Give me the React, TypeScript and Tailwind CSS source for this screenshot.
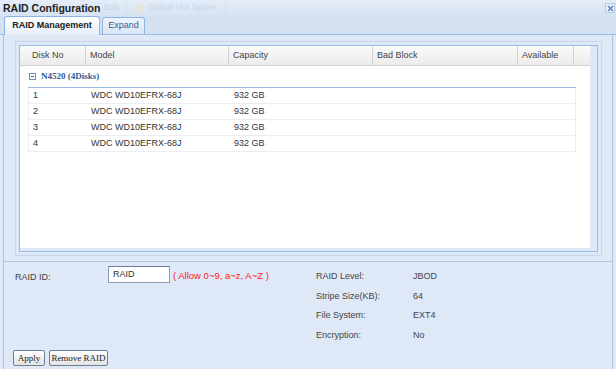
import React from 'react';

const disks = [
  { no: '1', model: 'WDC WD10EFRX-68J', capacity: '932 GB' },
  { no: '2', model: 'WDC WD10EFRX-68J', capacity: '932 GB' },
  { no: '3', model: 'WDC WD10EFRX-68J', capacity: '932 GB' },
  { no: '4', model: 'WDC WD10EFRX-68J', capacity: '932 GB' },
];

const info = [
  { label: 'RAID Level:', value: 'JBOD' },
  { label: 'Stripe Size(KB):', value: '64' },
  { label: 'File System:', value: 'EXT4' },
  { label: 'Encryption:', value: 'No' },
];

const sans = { fontFamily: '"Liberation Sans", Arial, sans-serif' };
const serif = { fontFamily: '"Liberation Serif", "Times New Roman", serif' };

export default function App() {
  return (
    <div
      className="w-[616px] h-[369px] bg-[#dfe8f6] flex flex-col overflow-hidden text-[9px] text-[#333]"
      style={sans}
    >
      {/* Title + faded toolbar */}
      <div className="h-[16px] flex items-center bg-gradient-to-b from-[#e4edf8] to-[#d6e3f3] relative">
        <span className="pl-[3px] text-[10.5px] leading-none font-bold text-[#222]">RAID Configuration</span>
        <div className="flex items-center ml-[3px] text-[#c9d6e8] text-[9px]">
          <span>Edit</span>
          <span className="w-[1px] h-[12px] bg-[#d3deec] mx-[7px]" />
          <span className="w-[10px] h-[10px] rounded-full bg-[#e3e6dc] mr-[3px]" />
          <span>Global Hot Spare</span>
          <span className="w-[1px] h-[12px] bg-[#d3deec] ml-[9px]" />
        </div>
        <div className="absolute right-[1px] top-[3px] w-[10px] h-[10px] border border-[#b6c9e3] bg-[#e8f0fa] flex items-center justify-center">
          <svg width="7" height="7" viewBox="0 0 7 7">
            <path d="M1 1 L6 6 M6 1 L1 6" stroke="#5b7eb3" strokeWidth="1.3" />
          </svg>
        </div>
      </div>

      {/* Tabs */}
      <div className="h-[19px] flex items-end pl-[4px] gap-[2px] border-b border-[#99bbe8] bg-[#d3e1f1]">
        <div className="h-[19px] w-[96px] flex items-center justify-center border border-b-0 border-[#8db2e3] rounded-t-[3px] bg-gradient-to-b from-white to-[#e6eefa] font-bold text-[#222] mb-[-1px]">
          RAID Management
        </div>
        <div className="h-[17px] w-[43px] flex items-center justify-center border border-b-0 border-[#8db2e3] rounded-t-[3px] bg-gradient-to-b from-[#eef4fc] to-[#d9e6f6] text-[#3b5e8e]">
          Expand
        </div>
      </div>

      {/* Body */}
      <div className="flex-1 flex flex-col border-l border-r border-[#b0c4de] ml-[3px] mr-[3px]">
        <div className="h-[226px] pt-[6px] pl-[11px] pr-[10px]">
          <div className="h-[215px] border border-[#c6d6ec] p-[3px]">
            <div className="h-full border border-[#99bbe8] bg-[#dfe8f6] flex pb-[3px]">
              <div className="w-[570px] h-full bg-white flex flex-col">
                {/* Header */}
                <div className="h-[20px] flex bg-gradient-to-b from-[#fbfbfb] to-[#ebebeb] border-b border-[#d0d0d0] text-[#444]">
                  <div className="w-[66px] pl-[12px] flex items-center border-r border-[#d0d0d0]">Disk No</div>
                  <div className="w-[143px] pl-[4px] flex items-center border-r border-[#d0d0d0]">Model</div>
                  <div className="w-[144px] pl-[4px] flex items-center border-r border-[#d0d0d0]">Capacity</div>
                  <div className="w-[145px] pl-[4px] flex items-center border-r border-[#d0d0d0]">Bad Block</div>
                  <div className="w-[56px] pl-[4px] flex items-center border-r border-[#d0d0d0]">Available</div>
                </div>
                {/* Group */}
                <div className="ml-[8px] mr-[14px] h-[22px] flex items-center border-b border-[#99bbe8]">
                  <div className="w-[7px] h-[7px] ml-[1px] border border-[#6f8db8] flex items-center justify-center">
                    <div className="w-[3px] h-[1px] bg-[#3c5f92]" />
                  </div>
                  <span className="ml-[5px] font-bold text-[#2f5a96]" style={serif}>
                    N4520 (4Disks)
                  </span>
                </div>
                {disks.map((d) => (
                  <div key={d.no} className="ml-[8px] mr-[14px] h-[16px] flex items-center border border-t-0 border-[#ededed] text-[#333]">
                    <div className="w-[58px] pl-[4px]">{d.no}</div>
                    <div className="w-[143px] pl-[4px]">{d.model}</div>
                    <div className="w-[144px] pl-[4px]">{d.capacity}</div>
                  </div>
                ))}
              </div>
            </div>
          </div>
        </div>

        {/* Settings */}
        <div className="flex-1 border-t border-[#b8c6d8] flex flex-col">
          <div className="flex pt-[4px]">
            <div className="w-[312px] pl-[11px] flex items-start">
              <span className="w-[93px] mt-[5px] text-[#444]">RAID ID:</span>
              <div className="w-[62px] h-[17px] border border-[#8a9db5] border-t-[#6c7f98] bg-white flex items-center pl-[4px] text-[#333]">
                RAID
              </div>
              <span className="ml-[3px] mt-[3px] text-[9.5px] text-[#ff2020]">( Allow 0~9, a~z, A~Z )</span>
            </div>
            <div className="flex flex-col gap-[10px] pt-[6px]">
              {info.map((r) => (
                <div key={r.label} className="flex h-[9.5px] items-center text-[#444]">
                  <span className="w-[97px]">{r.label}</span>
                  <span>{r.value}</span>
                </div>
              ))}
            </div>
          </div>
          <div className="mt-auto mb-[3px] pl-[9px] flex gap-[4px]">
            <button className="h-[16px] w-[32px] border border-[#6c7f98] rounded-[2px] bg-gradient-to-b from-white to-[#e3e3e3] text-[9px] text-[#222] leading-none" style={serif}>
              Apply
            </button>
            <button className="h-[16px] w-[59px] border border-[#6c7f98] rounded-[2px] bg-gradient-to-b from-white to-[#e3e3e3] text-[9px] text-[#222] leading-none" style={serif}>
              Remove RAID
            </button>
          </div>
        </div>
      </div>
    </div>
  );
}
